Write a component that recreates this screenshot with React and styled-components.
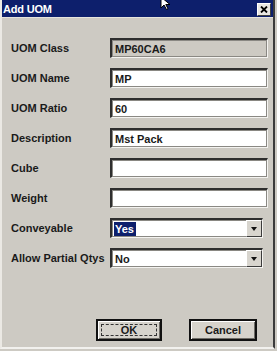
import * as React from "react";
import styled, { createGlobalStyle } from "styled-components";

const GlobalStyle = createGlobalStyle`
  html, body {
    margin: 0;
    padding: 0;
    background: #cdcac3;
  }
`;

const Window = styled.div`
  position: relative;
  width: 275px;
  height: 349px;
  box-sizing: border-box;
  background: #cdcac3;
  border-left: 2px solid #ebe9e4;
  border-right: 2px solid #3b3b3b;
  border-bottom: 2px solid #f2f1ee;
  display: flex;
  flex-direction: column;
  font-family: "Liberation Sans", Arial, sans-serif;
  font-size: 11px;
  font-weight: bold;
  color: #1a1a1a;
`;

const TitleBar = styled.div`
  height: 17px;
  background: #0d1f6c;
  border-bottom: 1px solid #e6e4de;
  display: flex;
  align-items: center;
  justify-content: space-between;
  padding: 0 2px 0 1px;
  color: #ffffff;
`;

const Title = styled.span`
  font-size: 11px;
  letter-spacing: -0.2px;
`;

const CloseButton = styled.div`
  width: 12px;
  height: 11px;
  margin-top: 2px;
  background: #e9e7e2;
  border-top: 1px solid #ffffff;
  border-left: 1px solid #ffffff;
  border-right: 1px solid #404040;
  border-bottom: 1px solid #404040;
  display: flex;
  align-items: center;
  justify-content: center;
`;

const Body = styled.div`
  flex: 1;
  display: flex;
  flex-direction: column;
  padding: 20px 0 0 7px;
`;

const Form = styled.div`
  display: grid;
  grid-template-columns: 101px 1fr;
  row-gap: 10px;
  align-items: center;
`;

const Label = styled.label`
  padding-left: 2px;
  white-space: nowrap;
`;

const Field = styled.div`
  box-sizing: border-box;
  width: ${(p) => (p.$select ? "153px" : "158px")};
  height: 20px;
  background: ${(p) => (p.$readOnly ? "#cdcac3" : "#ffffff")};
  border-top: 2px solid #2e2e2e;
  border-left: 2px solid #2e2e2e;
  border-right: 1px solid #f4f3f0;
  border-bottom: 1px solid #f4f3f0;
  box-shadow: 0 0 0 1px #8a8883 inset;
  display: flex;
  align-items: center;
  padding-left: 2px;
  overflow: hidden;
`;

const Value = styled.span`
  flex: 1;
  padding-left: ${(p) => (p.$selected ? "0" : "1px")};
`;

const Selected = styled.span`
  background: #0d1f6c;
  color: #ffffff;
  padding: 1px 2px 1px 1px;
`;

const DropButton = styled.div`
  box-sizing: border-box;
  width: 16px;
  height: 17px;
  background: #d8d5ce;
  border-top: 1px solid #ffffff;
  border-left: 1px solid #ffffff;
  border-right: 1px solid #3b3b3b;
  border-bottom: 1px solid #3b3b3b;
  display: flex;
  align-items: center;
  justify-content: center;
`;

const Arrow = styled.div`
  width: 0;
  height: 0;
  border-left: 3px solid transparent;
  border-right: 3px solid transparent;
  border-top: 4px solid #111;
`;

const Buttons = styled.div`
  display: flex;
  justify-content: flex-end;
  gap: 27px;
  padding: 51px 16px 0 0;
`;

const Button = styled.button`
  box-sizing: border-box;
  width: ${(p) => p.$w}px;
  height: 22px;
  padding: 0;
  background: #d6d3cc;
  border: 2px solid #111;
  box-shadow: inset 1px 1px 0 #ffffff, inset -1px -1px 0 #6e6c67;
  font-family: inherit;
  font-size: 11px;
  font-weight: bold;
  color: #1a1a1a;
  display: flex;
  align-items: center;
  justify-content: center;
`;

const Focus = styled.span`
  box-sizing: border-box;
  width: calc(100% - 6px);
  height: calc(100% - 6px);
  border: 1px dashed #333;
  display: flex;
  align-items: center;
  justify-content: center;
`;

const Cursor = styled.svg`
  position: absolute;
  left: 158px;
  top: -4px;
`;

const rows = [
  { label: "UOM Class", value: "MP60CA6", readOnly: true },
  { label: "UOM Name", value: "MP" },
  { label: "UOM Ratio", value: "60" },
  { label: "Description", value: "Mst Pack" },
  { label: "Cube", value: "" },
  { label: "Weight", value: "" },
  { label: "Conveyable", value: "Yes", select: true, selected: true },
  { label: "Allow Partial Qtys", value: "No", select: true },
];

export default function App() {
  return (
    <>
      <GlobalStyle />
      <Window>
        <TitleBar>
          <Title>Add UOM</Title>
          <CloseButton>
            <svg width="8" height="7" viewBox="0 0 8 7">
              <path d="M1 0.5 L7 6.5 M7 0.5 L1 6.5" stroke="#000" strokeWidth="1.8" />
            </svg>
          </CloseButton>
        </TitleBar>
        <Cursor width="12" height="14" viewBox="0 0 12 14">
          <path d="M1 1 L1 12 L4 9 L6.5 13.5 L8 12.8 L5.8 8.5 L10 8.5 Z" fill="#fff" stroke="#000" strokeWidth="1" />
        </Cursor>
        <Body>
          <Form>
            {rows.map((r) => (
              <React.Fragment key={r.label}>
                <Label>{r.label}</Label>
                <Field $readOnly={r.readOnly} $select={r.select}>
                  <Value $selected={r.selected}>
                    {r.selected ? <Selected>{r.value}</Selected> : r.value}
                  </Value>
                  {r.select && (
                    <DropButton>
                      <Arrow />
                    </DropButton>
                  )}
                </Field>
              </React.Fragment>
            ))}
          </Form>
          <Buttons>
            <Button $w={66}>
              <Focus>OK</Focus>
            </Button>
            <Button $w={68}>Cancel</Button>
          </Buttons>
        </Body>
      </Window>
    </>
  );
}
